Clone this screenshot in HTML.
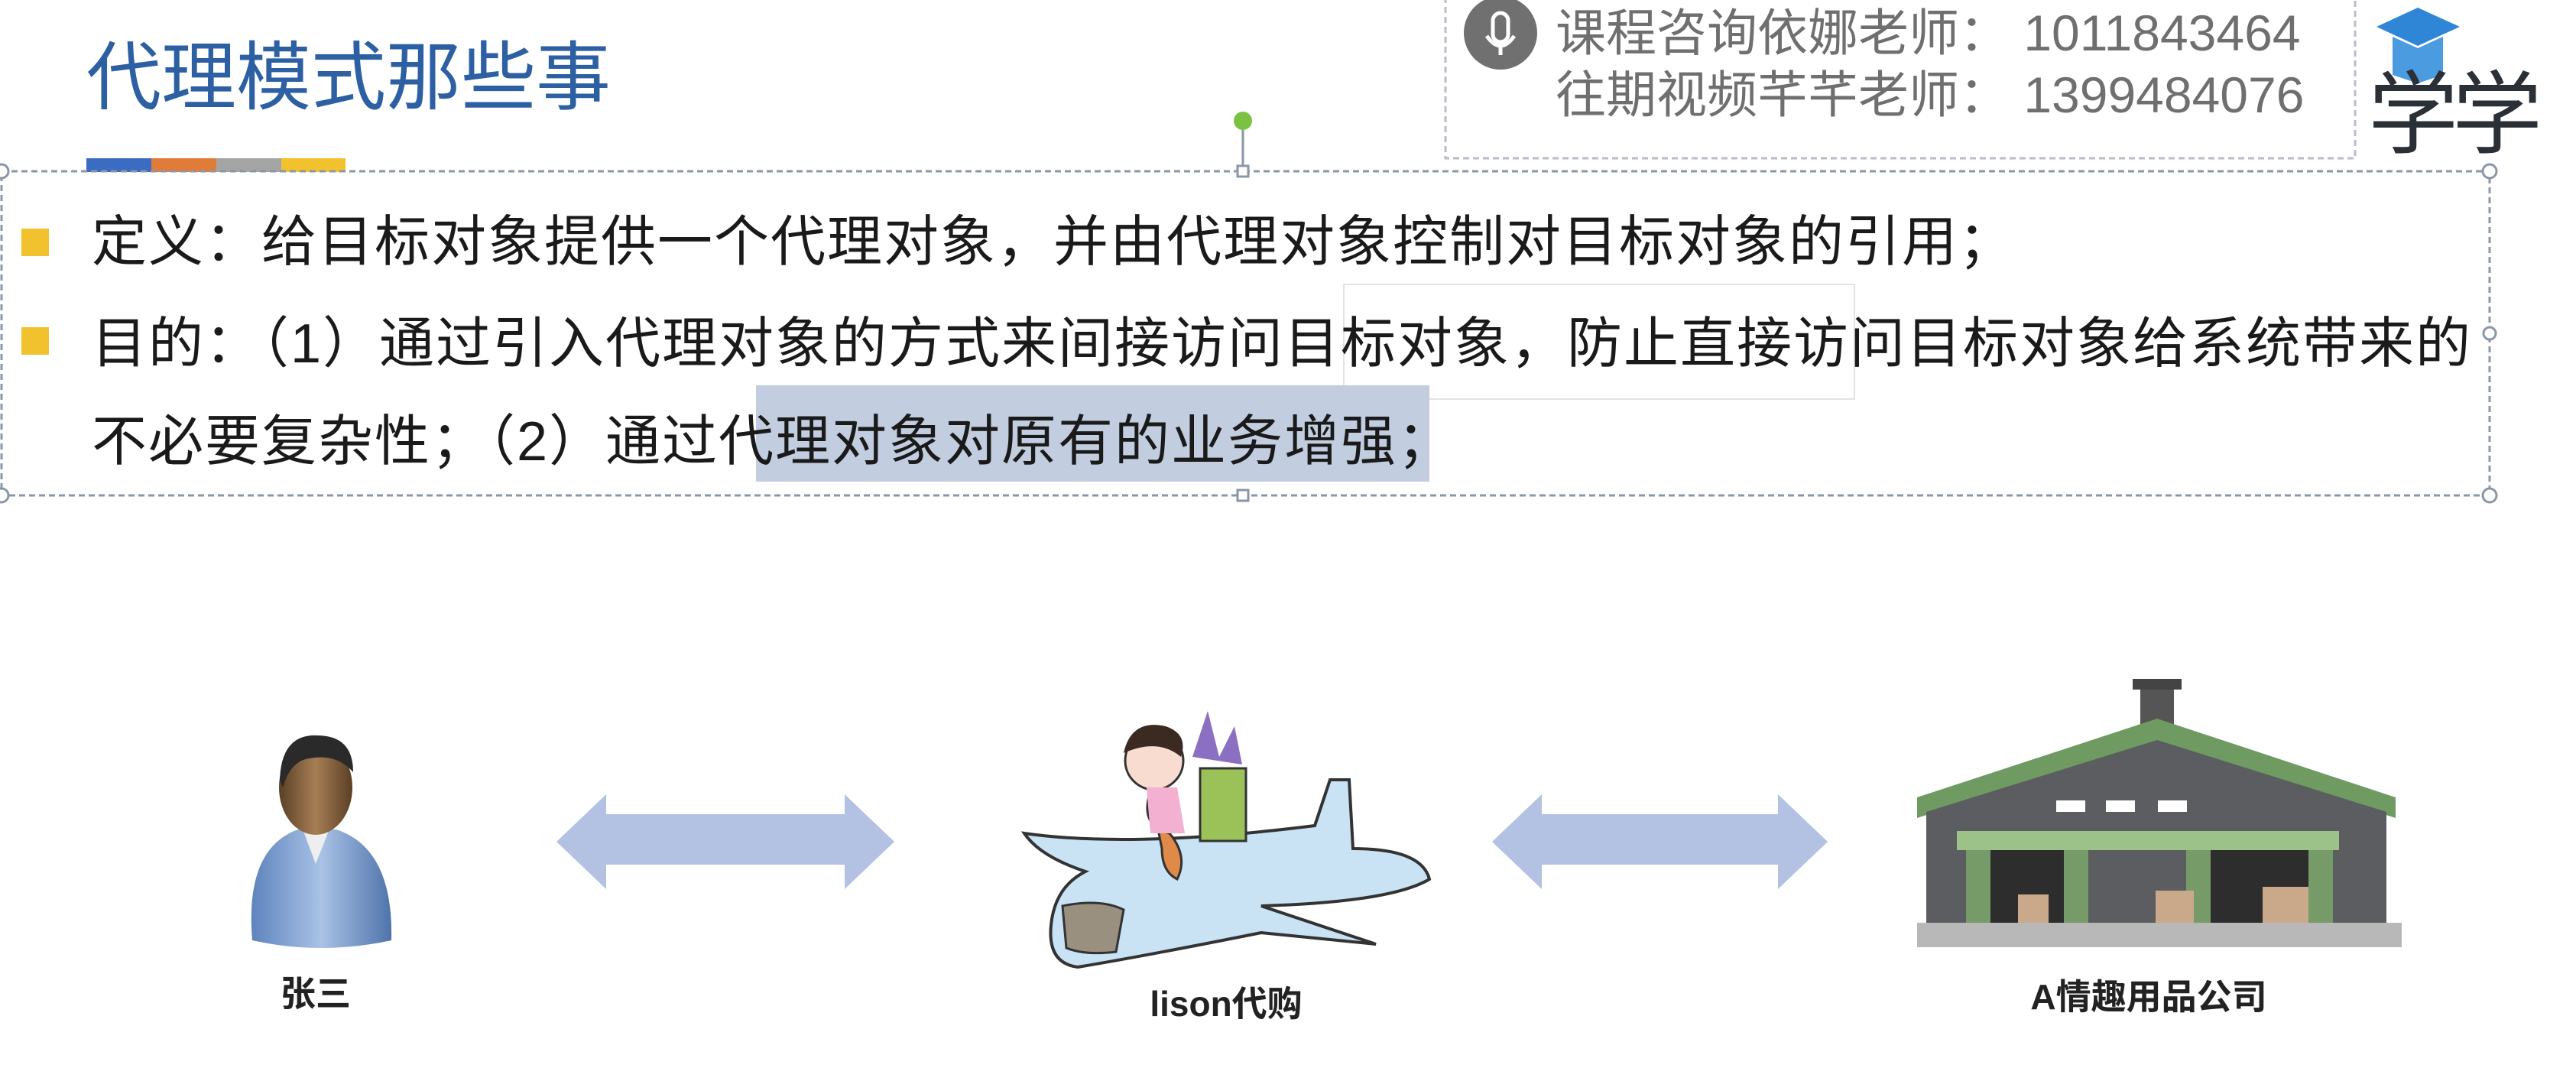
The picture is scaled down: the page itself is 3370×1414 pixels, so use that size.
<!DOCTYPE html>
<html><head><meta charset="utf-8"><style>
html,body{margin:0;padding:0;background:#fff;}
body{width:3370px;height:1414px;position:relative;overflow:hidden;font-family:"Liberation Sans","Noto Sans CJK SC",sans-serif;}
.a{position:absolute;white-space:nowrap;line-height:1;}
.t{font-size:72px;color:#1a1a1a;left:120px;letter-spacing:2px;}
.b{position:absolute;left:28px;width:36px;height:36px;background:#f2c12e;}
.lbl{font-size:46px;font-weight:bold;color:#222;transform:translateX(-50%);}
</style></head><body>
<div class="a" style="left:113px;top:52px;font-size:98px;color:#2d5fa3;">代理模式那些事</div>
<div class="a" style="left:113px;top:207px;width:85px;height:18px;background:#3b6cc2"></div>
<div class="a" style="left:198px;top:207px;width:85px;height:18px;background:#e07b39"></div>
<div class="a" style="left:283px;top:207px;width:85px;height:18px;background:#a5a5a5"></div>
<div class="a" style="left:368px;top:207px;width:84px;height:18px;background:#f2c12e"></div>
<svg class="a" style="left:0;top:0" width="3370" height="700">
<g fill="none" stroke="#8a97a8" stroke-width="3" stroke-dasharray="8 5">
<rect x="2" y="224" width="3255" height="424"/>
<rect x="1891" y="-5" width="1190" height="212" stroke="#b8bec8"/>
<line x1="1626" y1="168" x2="1626" y2="224" stroke-dasharray="none"/>
</g>
<g fill="#fff" stroke="#8a97a8" stroke-width="3">
<circle cx="2" cy="224" r="9"/><circle cx="3257" cy="224" r="9"/><circle cx="2" cy="648" r="9"/><circle cx="3257" cy="648" r="9"/>
<circle cx="3257" cy="436" r="8"/>
<rect x="1619" y="217" width="14" height="14"/><rect x="1619" y="641" width="14" height="14"/>
</g>
<circle cx="1626" cy="158" r="12" fill="#7cc242"/>
<circle cx="1963" cy="43" r="48" fill="#707070"/>
<rect x="1953" y="17" width="20" height="38" rx="10" fill="none" stroke="#fff" stroke-width="5"/>
<path d="M1945 47 q18 26 36 0 M1963 60 v12" fill="none" stroke="#fff" stroke-width="5"/>
<path d="M3109 35 L3163 10 L3218 35 L3163 60 Z" fill="#2f86d6"/>
<path d="M3130 48 v50 l33 11 l33 -11 v-50 l-33 15 z" fill="#4a9be0"/>
<rect x="1758" y="372" width="668" height="150" fill="#fff" fill-opacity="0.5" stroke="#e3e3e3" stroke-width="2"/>
<rect x="989" y="504" width="881" height="126" fill="#c2cde0"/>
</svg>
<div class="a" style="left:2035px;top:10px;font-size:66px;color:#6f6f6f;">课程咨询依娜老师： 1011843464</div>
<div class="a" style="left:2035px;top:91px;font-size:66px;color:#6f6f6f;">往期视频芊芊老师： 1399484076</div>
<div class="a" style="left:3098px;top:92px;font-size:118px;color:#2b3036;letter-spacing:-8px;">学学</div>
<div class="b" style="top:299px"></div>
<div class="b" style="top:428px"></div>
<div class="a t" style="top:281px;">定义：给目标对象提供一个代理对象，并由代理对象控制对目标对象的引用；</div>
<div class="a t" style="top:414px;">目的：（1）通过引入代理对象的方式来间接访问目标对象，防止直接访问目标对象给系统带来的</div>
<div class="a t" style="top:542px;">不必要复杂性；（2）通过代理对象对原有的业务增强；</div>
<svg class="a" style="left:0;top:700px" width="3370" height="714" viewBox="0 700 3370 714">
<defs>
<linearGradient id="sk" x1="0" x2="1"><stop offset="0" stop-color="#5a3f25"/><stop offset="0.5" stop-color="#a77e55"/><stop offset="1" stop-color="#5a3f25"/></linearGradient>
<linearGradient id="bd" x1="0" x2="1"><stop offset="0" stop-color="#5e84bd"/><stop offset="0.5" stop-color="#a9c2e6"/><stop offset="1" stop-color="#4f73aa"/></linearGradient>
</defs>
<path d="M330 1230 Q320 1110 390 1085 L440 1085 Q515 1110 512 1230 Q420 1250 330 1230Z" fill="url(#bd)"/>
<path d="M395 1082 L413 1130 L432 1082Z" fill="#eee"/>
<ellipse cx="413" cy="1030" rx="48" ry="62" fill="url(#sk)"/>
<path d="M366 1020 Q368 960 415 962 Q462 962 462 1010 Q440 985 405 992 Q380 995 370 1030Z" fill="#2a2a2a"/>
<path d="M728 1101 L793 1039 L793 1065 L1105 1065 L1105 1039 L1170 1101 L1105 1163 L1105 1131 L793 1131 L793 1163Z" fill="#b3c2e2"/>
<path d="M1952 1101 L2017 1039 L2017 1065 L2326 1065 L2326 1039 L2391 1101 L2326 1163 L2326 1131 L2017 1131 L2017 1163Z" fill="#b3c2e2"/>
<path d="M1340 1090 Q1480 1110 1720 1080 L1740 1020 L1765 1020 L1770 1110 Q1860 1110 1870 1150 Q1820 1180 1650 1185 L1800 1235 L1650 1220 Q1500 1250 1410 1265 Q1370 1260 1375 1210 Q1380 1160 1420 1140 Q1360 1120 1340 1090Z" fill="#c9e2f4" stroke="#333" stroke-width="4"/>
<path d="M1390 1185 Q1440 1175 1470 1190 L1460 1245 Q1420 1250 1395 1240Z" fill="#9a9080" stroke="#333" stroke-width="3"/>
<rect x="1570" y="1005" width="60" height="95" fill="#9bc259" stroke="#333" stroke-width="3"/>
<path d="M1560 990 l20 -60 l15 60 l20 -40 l10 50Z" fill="#8a6fc2"/>
<circle cx="1510" cy="995" r="38" fill="#f8dcd0" stroke="#333" stroke-width="3"/>
<path d="M1470 985 Q1480 940 1525 950 Q1555 960 1545 990 Q1515 965 1470 985Z" fill="#3a2a22"/>
<path d="M1505 1035 Q1490 1080 1530 1090 Q1555 1120 1540 1150 Q1520 1140 1520 1110Z" fill="#e08a4a" stroke="#333" stroke-width="3"/>
<path d="M1500 1030 l40 0 l10 60 l-45 0Z" fill="#f3b0d0"/>
<rect x="2800" y="891" width="44" height="70" fill="#555"/>
<rect x="2790" y="888" width="64" height="14" fill="#444"/>
<path d="M2508 1043 L2822 940 L3134 1043 L3134 1070 L2822 970 L2508 1070Z" fill="#6f9a61"/>
<path d="M2520 1062 L2822 968 L3122 1062 L3122 1210 L2520 1210Z" fill="#5b5d60"/>
<rect x="2560" y="1087" width="500" height="25" fill="#9cc28a"/>
<g fill="#fff"><rect x="2690" y="1047" width="38" height="15"/><rect x="2755" y="1047" width="38" height="15"/><rect x="2823" y="1047" width="38" height="15"/></g>
<g fill="#769a68"><rect x="2572" y="1112" width="32" height="95"/><rect x="2700" y="1112" width="32" height="95"/><rect x="2860" y="1112" width="32" height="95"/><rect x="3020" y="1112" width="32" height="95"/></g>
<g fill="#2d2d2d"><rect x="2604" y="1112" width="96" height="95"/><rect x="2892" y="1112" width="128" height="95"/></g>
<g fill="#c9a98a"><rect x="2640" y="1170" width="40" height="37"/><rect x="2820" y="1165" width="50" height="42"/><rect x="2960" y="1160" width="60" height="47"/></g>
<rect x="2508" y="1207" width="634" height="32" fill="#b8b8b8"/>
</svg>
<div class="a lbl" style="left:413px;top:1277px;">张三</div>
<div class="a lbl" style="left:1604px;top:1290px;">lison代购</div>
<div class="a lbl" style="left:2811px;top:1281px;">A情趣用品公司</div>
</body></html>
